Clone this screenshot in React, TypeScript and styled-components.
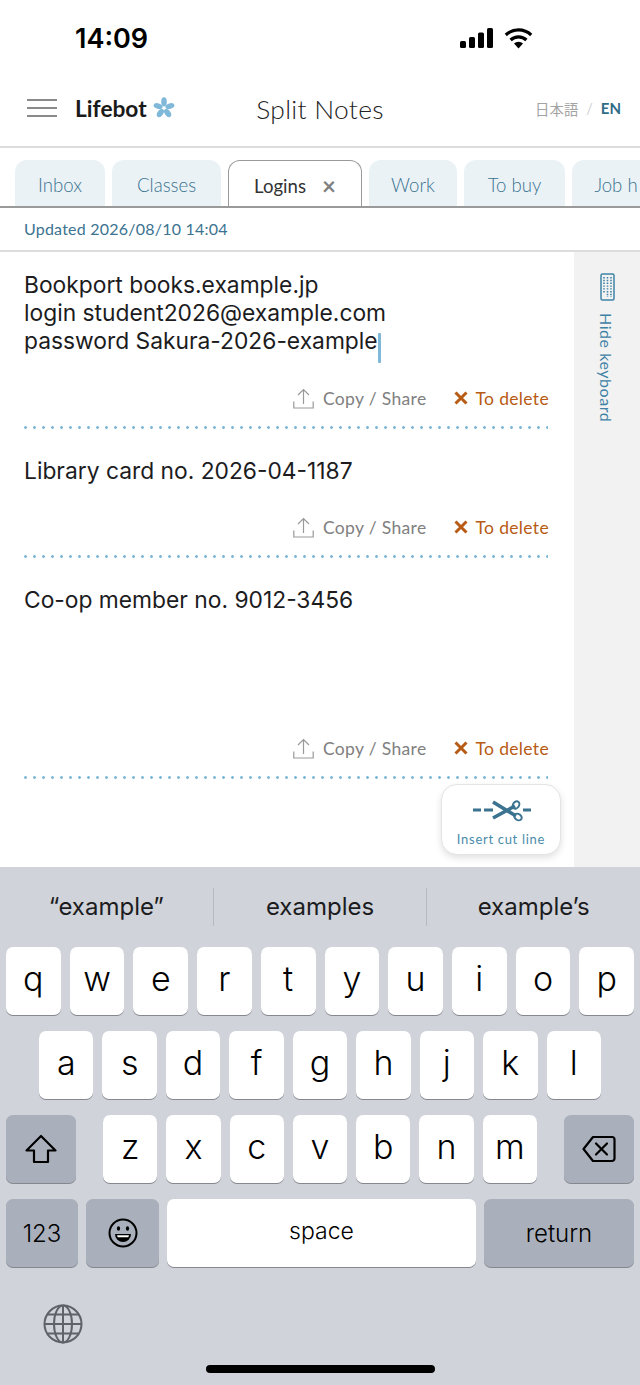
import styled, { createGlobalStyle } from "styled-components";

const GlobalStyle = createGlobalStyle`
  html, body {
    margin: 0;
    padding: 0;
    background: #fff;
  }
`;

const Color = {
  teal: "#3b7390",
  tealLight: "#3f82a5",
  sky: "#7fb8d8",
  tabBg: "#eaf2f6",
  orange: "#b85b14",
  gray: "#808080",
  line: "#dcdcdc",
  keyboard: "#d0d3da",
  keyDark: "#aab0bb",
};

const Page = styled.div`
  width: 640px;
  height: 1385px;
  display: flex;
  flex-direction: column;
  overflow: hidden;
  font-family: Inter, "Liberation Sans", sans-serif;
  color: #1c1c1e;
`;

const StatusBar = styled.div`
  height: 76px;
  box-sizing: border-box;
  display: flex;
  align-items: center;
  padding: 0 107px 0 75px;
  justify-content: space-between;
`;

const StatusTime = styled.span`
  font-family: Inter, sans-serif;
  font-size: 27px;
  font-weight: 600;
  color: #000;
`;

const StatusIcons = styled.div`
  display: flex;
  align-items: center;
  gap: 11px;
`;

const Header = styled.header`
  height: 72px;
  box-sizing: border-box;
  border-bottom: 2px solid ${Color.line};
  display: grid;
  grid-template-columns: 1fr auto 1fr;
  align-items: center;
  padding: 0 27px 6px;
`;

const HeaderLeft = styled.div`
  display: flex;
  align-items: center;
`;

const MenuIcon = styled.div`
  width: 30px;
  height: 18px;
  margin-right: 18px;
  display: flex;
  flex-direction: column;
  justify-content: space-between;
  span {
    height: 2px;
    background: #8a8a8a;
  }
`;

const Brand = styled.span`
  font-family: Lato, sans-serif;
  font-size: 22.7px;
  font-weight: 700;
  color: #1a1a1a;
  margin-right: 6px;
`;

const Title = styled.h1`
  margin: 2px 0 0;
  font-family: Lato, sans-serif;
  font-size: 26.4px;
  font-weight: 300;
  color: #222;
  letter-spacing: 0.3px;
`;

const LangSwitch = styled.div`
  justify-self: end;
  margin-right: -8px;
  display: flex;
  align-items: center;
  gap: 8px;
  font-size: 14.4px;
  color: #a3a3a3;
  font-family: Lato, "Noto Sans CJK JP", sans-serif;
`;

const LangSlash = styled.span`
  color: #d0d0d0;
`;

const LangActive = styled.span`
  color: #2f6c88;
  font-weight: 700;
  font-size: 15px;
`;

const TabBar = styled.nav`
  height: 60px;
  box-sizing: border-box;
  border-bottom: 2px solid #9a9a9a;
  display: flex;
  align-items: flex-end;
  gap: 7px;
  padding-left: 15px;
  overflow: hidden;
`;

const Tab = styled.div<{ $width: number; $active?: boolean }>`
  flex: 0 0 ${({ $width }) => $width}px;
  box-sizing: border-box;
  height: ${({ $active }) => ($active ? 48 : 46)}px;
  margin-bottom: ${({ $active }) => ($active ? -2 : 0)}px;
  padding-top: ${({ $active }) => ($active ? 3 : 4)}px;
  border-radius: 12px 12px 0 0;
  display: flex;
  align-items: center;
  justify-content: center;
  gap: 16px;
  font-family: Lato, sans-serif;
  font-size: 18.6px;
  font-weight: ${({ $active }) => ($active ? 400 : 300)};
  background: ${({ $active }) => ($active ? "#fff" : Color.tabBg)};
  color: ${({ $active }) => ($active ? "#333" : Color.teal)};
  ${({ $active }) => ($active ? "border: 1.5px solid #9a9a9a; border-bottom: none;" : "")}
`;

const TabClose = styled.span`
  font-size: 24px;
  font-weight: 700;
  color: #808080;
  line-height: 1;
`;

const UpdatedRow = styled.div`
  height: 44px;
  box-sizing: border-box;
  border-bottom: 2px solid ${Color.line};
  padding: 0 24px 1px;
  display: flex;
  align-items: center;
  font-family: Lato, sans-serif;
  font-size: 16px;
  letter-spacing: 0.22px;
  color: ${Color.teal};
`;

const Workspace = styled.main`
  position: relative;
  height: 615px;
  display: flex;
`;

const Notes = styled.section`
  width: 574px;
  box-sizing: border-box;
  padding: 0 26px 0 24px;
`;

const Note = styled.article<{ $top: number; $textHeight: number }>`
  padding-top: ${({ $top }) => $top}px;
  display: flex;
  flex-direction: column;
  p {
    min-height: ${({ $textHeight }) => $textHeight}px;
  }
`;

const NoteText = styled.p`
  margin: 0 0 30px;
  font-size: 22.8px;
  line-height: 28px;
  white-space: pre-line;
`;

const Caret = styled.span`
  display: inline-block;
  width: 3px;
  height: 30px;
  margin: -6px -3px -6px 0;
  border-radius: 1px;
  background: ${Color.sky};
  vertical-align: -8px;
`;

const NoteActions = styled.div`
  display: flex;
  justify-content: flex-end;
  align-items: center;
  box-sizing: border-box;
  height: 24px;
  padding-bottom: 2px;
  font-family: Lato, sans-serif;
  font-size: 17.5px;
  letter-spacing: 0.34px;
`;

const ActionButton = styled.span<{ $danger?: boolean }>`
  display: flex;
  align-items: center;
  gap: ${({ $danger }) => ($danger ? 8 : 9)}px;
  margin-left: ${({ $danger }) => ($danger ? 28 : 0)}px;
  margin-right: -1px;
  color: ${({ $danger }) => ($danger ? Color.orange : Color.gray)};
`;

const DottedRule = styled.div`
  height: 3px;
  margin-top: 15px;
  background-image: radial-gradient(circle at 1.5px 1.5px, ${Color.sky} 1.2px, transparent 1.6px);
  background-size: 9px 3px;
  background-repeat: repeat-x;
`;

const Sidebar = styled.aside`
  width: 66px;
  background: #f2f2f2;
  display: flex;
  flex-direction: column;
  align-items: center;
  padding-top: 21px;
  gap: 12px;
  box-sizing: border-box;
`;

const SideLabel = styled.span`
  writing-mode: vertical-rl;
  font-family: Lato, sans-serif;
  font-size: 16px;
  letter-spacing: 0.55px;
  color: ${Color.tealLight};
  margin-right: 2px;
`;

const CutButton = styled.button`
  position: absolute;
  left: 441px;
  top: 532px;
  width: 120px;
  height: 71px;
  box-sizing: border-box;
  background: #fff;
  border: 1px solid #e4e4e4;
  border-radius: 16px;
  box-shadow: 0 3px 7px rgba(0, 0, 0, 0.12);
  display: flex;
  flex-direction: column;
  align-items: center;
  padding: 13px 0 0;
  gap: 9px;
  font-family: Lato, sans-serif;
  font-size: 13px;
  letter-spacing: 0.7px;
  color: #4a8bab;
`;

const Keyboard = styled.div`
  flex: 1;
  background: ${Color.keyboard};
  position: relative;
  display: flex;
  flex-direction: column;
`;

const Suggestions = styled.div`
  height: 80px;
  display: flex;
  align-items: center;
  box-sizing: border-box;
`;

const Suggestion = styled.div<{ $divider?: boolean }>`
  flex: 1;
  height: 38px;
  line-height: 38px;
  text-align: center;
  font-size: 24px;
  color: #1c1c1e;
  border-left: ${({ $divider }) => ($divider ? "1px solid #b6b9c0" : "none")};
`;

const KeyRows = styled.div`
  display: flex;
  flex-direction: column;
  gap: 16px;
`;

const KeyRow = styled.div<{ $inset?: number; $gap?: number; $between?: boolean }>`
  height: 68px;
  display: flex;
  gap: ${({ $gap }) => $gap ?? 9}px;
  padding: 0 ${({ $inset }) => $inset ?? 6}px;
  justify-content: ${({ $between }) => ($between ? "space-between" : "flex-start")};
`;

const Key = styled.div<{ $width?: number; $dark?: boolean; $size?: number }>`
  flex: ${({ $width }) => ($width ? `0 0 ${$width}px` : "1 1 0")};
  border-radius: 7px;
  background: ${({ $dark }) => ($dark ? Color.keyDark : "#fff")};
  box-shadow: 0 1px 0 #85888f;
  display: flex;
  align-items: center;
  justify-content: center;
  font-size: ${({ $size }) => $size ?? 32}px;
  font-family: Inter, sans-serif;
  font-weight: 300;
  color: #000;
`;

const LetterKey = styled(Key)`
  font-size: 34px;
  padding-bottom: 6px;
  box-sizing: border-box;
`;

const SpaceKey = styled(Key)`
  padding-bottom: 4px;
  box-sizing: border-box;
`;

const LetterGroup = styled.div`
  flex: 0 0 434px;
  display: flex;
  gap: 9px;
`;

const GlobeSlot = styled.div`
  padding: 37px 0 0 43px;
  height: 40px;
`;

const HomeBar = styled.div`
  position: absolute;
  left: 206px;
  bottom: 12px;
  width: 229px;
  height: 8px;
  border-radius: 4px;
  background: #000;
`;

const SignalIcon = () => (
  <svg width="33" height="20" viewBox="0 0 33 20">
    <rect x="0" y="13" width="6" height="7" rx="1.5" fill="#000" />
    <rect x="9" y="9" width="6" height="11" rx="1.5" fill="#000" />
    <rect x="18" y="4.5" width="6" height="15.5" rx="1.5" fill="#000" />
    <rect x="27" y="0" width="6" height="20" rx="1.5" fill="#000" />
  </svg>
);

const WifiIcon = () => (
  <svg width="29" height="21" viewBox="0 0 29 21">
    <path d="M14.5 20.5 10 15.6a6.6 6.6 0 0 1 9 0Z" fill="#000" />
    <path d="M6.6 12a11.4 11.4 0 0 1 15.8 0" fill="none" stroke="#000" strokeWidth="3.2" />
    <path d="M1.8 7a18.4 18.4 0 0 1 25.4 0" fill="none" stroke="#000" strokeWidth="3.2" />
  </svg>
);

const FlowerIcon = () => (
  <svg width="22" height="22" viewBox="-11 -11 22 22">
    {[0, 72, 144, 216, 288].map((angle) => (
      <ellipse key={angle} cx="0" cy="-6.2" rx="2.8" ry="4.6" fill={Color.sky} transform={`rotate(${angle})`} />
    ))}
  </svg>
);

const ShareIcon = () => (
  <svg width="21" height="21" viewBox="0 0 21 21" fill="none" stroke="#9a9a9a" strokeWidth="1.2">
    <path d="M10.5 16V1.500M5 7l5.500-5.500L16 7" />
    <path d="M.8 13.500v6.500h19.400v-6.500" />
  </svg>
);

const DeleteIcon = () => (
  <svg width="14" height="14" viewBox="0 0 14 14" stroke={Color.orange} strokeWidth="3">
    <path d="M1.500 1.500l11 11M12.500 1.500l-11 11" />
  </svg>
);

const KeyboardIcon = () => (
  <svg width="15" height="28" viewBox="0 0 15 28" fill="none">
    <rect x="1" y="1" width="13" height="26" rx="1.500" stroke={Color.tealLight} strokeWidth="1.500" />
    <path
      d="M4 4v16M7.500 4v20M11 4v20"
      stroke={Color.tealLight}
      strokeWidth="1.600"
      strokeDasharray="1.400 1.400"
    />
  </svg>
);

const ScissorsIcon = () => (
  <svg width="60" height="24" viewBox="0 0 60 24" fill="none" stroke={Color.teal}>
    <path d="M2 12h8M13 12h9M52 12h8" strokeWidth="3" />
    <path d="M22 4 45 18M22 20 44 8" strokeWidth="3.600" />
    <ellipse cx="45" cy="7" rx="3" ry="4" strokeWidth="2" transform="rotate(35 45 7)" />
    <ellipse cx="47" cy="19" rx="4" ry="3" strokeWidth="2" transform="rotate(35 47 19)" />
  </svg>
);

const ShiftIcon = () => (
  <svg width="34" height="34" viewBox="0 0 34 34" fill="none" stroke="#000" strokeWidth="2.200" strokeLinejoin="round">
    <path d="M17 4 2.500 18.500H10V30h14V18.500h7.500Z" />
  </svg>
);

const BackspaceIcon = () => (
  <svg width="34" height="28" viewBox="0 0 34 28" fill="none" stroke="#000" strokeWidth="2.200" strokeLinejoin="round">
    <path d="M11 2h19a2.500 2.500 0 0 1 2.500 2.500v19a2.500 2.500 0 0 1-2.500 2.500H11L1.500 14Z" />
    <path d="M14 8.500l11 11M25 8.500l-11 11" strokeLinecap="round" />
  </svg>
);

const EmojiIcon = () => (
  <svg width="30" height="30" viewBox="0 0 30 30">
    <circle cx="15" cy="15" r="13.500" fill="none" stroke="#000" strokeWidth="2" />
    <ellipse cx="10.500" cy="10.500" rx="1.600" ry="2.300" fill="#000" />
    <ellipse cx="19.500" cy="10.500" rx="1.600" ry="2.300" fill="#000" />
    <path d="M7 16h16a8 8 0 0 1-16 0Z" fill="#000" />
    <path d="M9 17.300h12l-.7 2H9.700Z" fill="#fff" />
  </svg>
);

const GlobeIcon = () => (
  <svg width="40" height="40" viewBox="0 0 40 40" fill="none" stroke="#5f6368" strokeWidth="2">
    <circle cx="20" cy="20" r="18.500" />
    <ellipse cx="20" cy="20" rx="9" ry="18.500" />
    <path d="M20 1.500v37M1.500 20h37M4.500 10.500h31M4.500 29.500h31" />
  </svg>
);

const tabs = [
  { label: "Inbox", width: 90 },
  { label: "Classes", width: 109 },
  { label: "Logins", width: 134, active: true },
  { label: "Work", width: 88 },
  { label: "To buy", width: 101 },
  { label: "Job h", width: 88 },
];

const rowOne = ["q", "w", "e", "r", "t", "y", "u", "i", "o", "p"];
const rowTwo = ["a", "s", "d", "f", "g", "h", "j", "k", "l"];
const rowThree = ["z", "x", "c", "v", "b", "n", "m"];

const Actions = () => (
  <NoteActions>
    <ActionButton>
      <ShareIcon />
      Copy / Share
    </ActionButton>
    <ActionButton $danger>
      <DeleteIcon />
      To delete
    </ActionButton>
  </NoteActions>
);

export default function App() {
  return (
    <Page>
      <GlobalStyle />
      <StatusBar>
        <StatusTime>14:09</StatusTime>
        <StatusIcons>
          <SignalIcon />
          <WifiIcon />
        </StatusIcons>
      </StatusBar>

      <Header>
        <HeaderLeft>
          <MenuIcon>
            <span />
            <span />
            <span />
          </MenuIcon>
          <Brand>Lifebot</Brand>
          <FlowerIcon />
        </HeaderLeft>
        <Title>Split Notes</Title>
        <LangSwitch>
          <span>日本語</span>
          <LangSlash>/</LangSlash>
          <LangActive>EN</LangActive>
        </LangSwitch>
      </Header>

      <TabBar>
        {tabs.map((tab) => (
          <Tab key={tab.label} $width={tab.width} $active={tab.active}>
            {tab.label}
            {tab.active && <TabClose>×</TabClose>}
          </Tab>
        ))}
      </TabBar>

      <UpdatedRow>Updated 2026/08/10 14:04</UpdatedRow>

      <Workspace>
        <Notes>
          <Note $top={19} $textHeight={84}>
            <NoteText>
              {"Bookport books.example.jp\nlogin student2026@example.com\npassword Sakura-2026-example"}
              <Caret />
            </NoteText>
            <Actions />
            <DottedRule />
          </Note>
          <Note $top={28} $textHeight={29}>
            <NoteText>Library card no. 2026-04-1187</NoteText>
            <Actions />
            <DottedRule />
          </Note>
          <Note $top={28} $textHeight={121}>
            <NoteText>Co-op member no. 9012-3456</NoteText>
            <Actions />
            <DottedRule />
          </Note>
        </Notes>
        <Sidebar>
          <KeyboardIcon />
          <SideLabel>Hide keyboard</SideLabel>
        </Sidebar>
        <CutButton>
          <ScissorsIcon />
          Insert cut line
        </CutButton>
      </Workspace>

      <Keyboard>
        <Suggestions>
          <Suggestion>“example”</Suggestion>
          <Suggestion $divider>examples</Suggestion>
          <Suggestion $divider>example’s</Suggestion>
        </Suggestions>
        <KeyRows>
          <KeyRow>
            {rowOne.map((letter) => (
              <LetterKey key={letter}>{letter}</LetterKey>
            ))}
          </KeyRow>
          <KeyRow $inset={39}>
            {rowTwo.map((letter) => (
              <LetterKey key={letter}>{letter}</LetterKey>
            ))}
          </KeyRow>
          <KeyRow $between>
            <Key $dark $width={70}>
              <ShiftIcon />
            </Key>
            <LetterGroup>
              {rowThree.map((letter) => (
                <LetterKey key={letter}>{letter}</LetterKey>
              ))}
            </LetterGroup>
            <Key $dark $width={70}>
              <BackspaceIcon />
            </Key>
          </KeyRow>
          <KeyRow $gap={8}>
            <Key $dark $width={72} $size={24}>
              123
            </Key>
            <Key $dark $width={73}>
              <EmojiIcon />
            </Key>
            <SpaceKey $size={23}>space</SpaceKey>
            <Key $dark $width={150} $size={24}>
              return
            </Key>
          </KeyRow>
        </KeyRows>
        <GlobeSlot>
          <GlobeIcon />
        </GlobeSlot>
        <HomeBar />
      </Keyboard>
    </Page>
  );
}
